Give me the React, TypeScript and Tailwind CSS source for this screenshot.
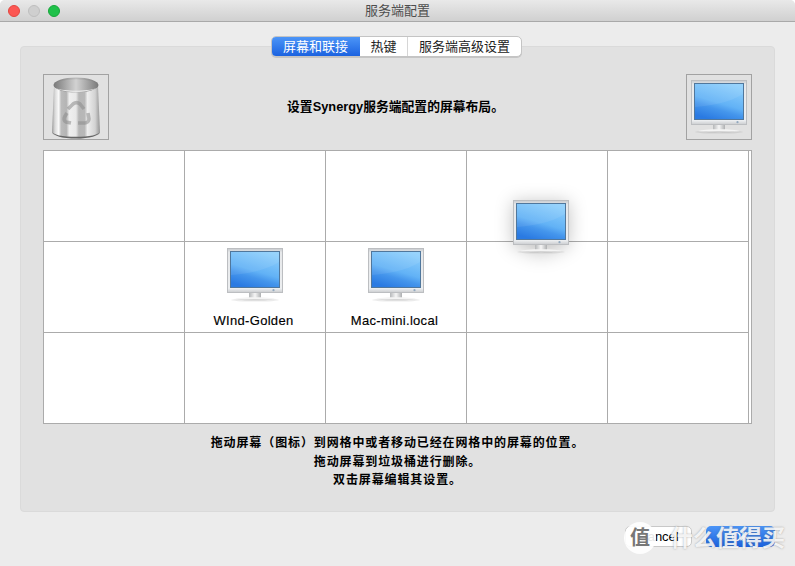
const FONT = "font-['Helvetica_Neue','Liberation_Sans','Noto_Sans_CJK_SC',sans-serif]";

const Monitor = ({ id }: { id: string }) => (
  <svg width="56" height="54" viewBox="0 0 56 54" className="block">
    <defs>
      <linearGradient id={`${id}-bezel`} x1="0" y1="0" x2="0" y2="1">
        <stop offset="0" stopColor="#c4c7cb" />
        <stop offset="0.1" stopColor="#e6e8ea" />
        <stop offset="0.9" stopColor="#eceef0" />
        <stop offset="1" stopColor="#c6c8cb" />
      </linearGradient>
      <linearGradient id={`${id}-screen`} x1="0.75" y1="0" x2="0.35" y2="1">
        <stop offset="0" stopColor="#8fd0fc" />
        <stop offset="0.55" stopColor="#62b2f6" />
        <stop offset="0.72" stopColor="#4596ec" />
        <stop offset="1" stopColor="#2a7ae2" />
      </linearGradient>
      <linearGradient id={`${id}-neck`} x1="0" y1="0" x2="1" y2="0">
        <stop offset="0" stopColor="#b5b7b9" />
        <stop offset="0.5" stopColor="#f6f6f6" />
        <stop offset="1" stopColor="#adafb1" />
      </linearGradient>
      <linearGradient id={`${id}-base`} x1="0" y1="0" x2="1" y2="0">
        <stop offset="0" stopColor="#9a9a9a" stopOpacity="0.15" />
        <stop offset="0.5" stopColor="#b5b5b5" />
        <stop offset="1" stopColor="#9a9a9a" stopOpacity="0.15" />
      </linearGradient>
    </defs>
    <ellipse cx="28" cy="52" rx="24" ry="1.6" fill="#000" opacity="0.08" />
    <rect x="22" y="44" width="12" height="6" fill={`url(#${id}-neck)`} />
    <path d="M7 51 C12 48.5 44 48.5 49 51 C44 52.5 12 52.5 7 51 Z" fill="#f4f4f4" />
    <path d="M7 51 C12 52.8 44 52.8 49 51 C44 51.8 12 51.8 7 51 Z" fill={`url(#${id}-base)`} />
    <rect x="0" y="0" width="56" height="45" fill={`url(#${id}-bezel)`} />
    <rect x="0.5" y="0.5" width="55" height="44" fill="none" stroke="#bcbec1" />
    <rect x="3.5" y="3.5" width="49" height="36" fill={`url(#${id}-screen)`} stroke="#50779c" />
    <path d="M4 27 C18 26 38 23 52 14 V4 H4 Z" fill="#fff" opacity="0.08" />
    <circle cx="46.5" cy="42.2" r="1.1" fill="#93a9bf" />
  </svg>
);

const Trash = () => (
  <svg width="50" height="63" viewBox="0 0 50 63" className="block">
    <defs>
      <linearGradient id="can" x1="0" y1="0" x2="1" y2="0">
        <stop offset="0" stopColor="#9a9a9a" />
        <stop offset="0.06" stopColor="#d8d8d8" />
        <stop offset="0.14" stopColor="#fafafa" />
        <stop offset="0.19" stopColor="#bcbcbc" />
        <stop offset="0.3" stopColor="#b4b4b4" />
        <stop offset="0.36" stopColor="#efefef" />
        <stop offset="0.5" stopColor="#e8e8e8" />
        <stop offset="0.56" stopColor="#b6b6b6" />
        <stop offset="0.68" stopColor="#b8b8b8" />
        <stop offset="0.74" stopColor="#eeeeee" />
        <stop offset="0.9" stopColor="#d2d2d2" />
        <stop offset="1" stopColor="#949494" />
      </linearGradient>
      <linearGradient id="rim" x1="0" y1="0" x2="1" y2="0">
        <stop offset="0" stopColor="#777" />
        <stop offset="0.5" stopColor="#bdbdbd" />
        <stop offset="1" stopColor="#777" />
      </linearGradient>
      <linearGradient id="inner" x1="0" y1="0" x2="1" y2="0">
        <stop offset="0" stopColor="#7d7d7d" />
        <stop offset="0.5" stopColor="#d2d2d2" />
        <stop offset="1" stopColor="#7d7d7d" />
      </linearGradient>
    </defs>
    <path d="M3 10 L1 56 C1 60 12 62.5 25 62.5 C38 62.5 49 60 49 56 L47 10 Z" fill="url(#can)" />
    <path d="M1 55 C1 60 12 62.5 25 62.5 C38 62.5 49 60 49 55 C49 59 38 60.8 25 60.8 C12 60.8 1 59 1 55 Z" fill="#666" />
    <ellipse cx="25" cy="9" rx="22.5" ry="7.5" fill="url(#rim)" />
    <ellipse cx="25" cy="9.6" rx="21.5" ry="6.4" fill="url(#inner)" />
    <path d="M5 12 C12 17 38 17 45 12 C38 15.6 12 15.6 5 12 Z" fill="#f0f0f0" />
    <g fill="none" stroke="#8c8c8c" strokeWidth="3.6" opacity="0.55">
      <path d="M17 33 L22 28 C24 26.5 27 26.5 29 28 L33 33" />
      <path d="M37 37 L38 43 C38 45 36 47 34 47 L27 47" />
      <path d="M20 47 L15 46 C13 45 12.5 43 13.5 41 L16 37" />
    </g>
  </svg>
);

const IconBox = ({ children }: { children: React.ReactNode }) => (
  <div className="flex h-[66px] w-[66px] shrink-0 items-center justify-center border border-[#a2a2a2]">
    {children}
  </div>
);

const Cell = ({ children }: { children?: React.ReactNode }) => (
  <div className="flex h-[91px] w-[141px] flex-col items-center border-r border-b border-[#ababab] pt-[6px]">
    {children}
  </div>
);

const Screen = ({ id, label }: { id: string; label: string }) => (
  <>
    <Monitor id={id} />
    <span className="mt-[11px] whitespace-nowrap pr-[3px] text-[13px] leading-[16px] tracking-[0.3px] text-black [-webkit-text-stroke:0.15px_black]">
      {label}
    </span>
  </>
);

export default function App() {
  return (
    <div className={`relative h-[566px] w-[795px] overflow-hidden rounded-t-[5px] bg-[#ececec] ${FONT}`}>
      <div className="relative flex h-[22px] items-center justify-center border-b border-[#a9a9a9] bg-gradient-to-b from-[#e9e9e9] to-[#d0d0d0]">
        <div className="absolute left-[8px] top-[5px] flex gap-[8px]">
          <span className="h-[12px] w-[12px] rounded-full border border-[#e2463f] bg-[#fc5753]" />
          <span className="h-[12px] w-[12px] rounded-full border border-[#bebebe] bg-[#cfcfcf]" />
          <span className="h-[12px] w-[12px] rounded-full border border-[#17a63a] bg-[#1fc14a]" />
        </div>
        <span className="text-[13px] text-[#4d4d4d]">服务端配置</span>
      </div>

      <div className="mx-[20px] mt-[24px] h-[466px] rounded-[4px] border border-[#dadada] bg-[#e1e1e1] px-[22px]">
        <div className="-mt-[11px] flex justify-center pr-[2px]">
          <div className="flex h-[21px] overflow-hidden rounded-[5px] border border-[#c4c4c4] bg-white text-[13px] leading-[19px] text-[#222] shadow-[0_1px_0_rgba(0,0,0,0.12)]">
            <span className="w-[88px] bg-gradient-to-b from-[#4c95f7] to-[#1b62e0] pr-[1px] text-center text-white">屏幕和联接</span>
            <span className="w-[48px] border-r border-[#d6d6d6] text-center">热键</span>
            <span className="w-[113px] text-center">服务端高级设置</span>
          </div>
        </div>

        <div className="mt-[17px] flex items-center justify-between">
          <IconBox>
            <Trash />
          </IconBox>
          <span className="pr-[4px] text-[12.8px] font-semibold text-black">设置Synergy服务端配置的屏幕布局。</span>
          <IconBox>
            <Monitor id="box" />
          </IconBox>
        </div>

        <div className="relative mt-[10px] w-[709px] border-t border-r border-l border-[#ababab] bg-white">
          <div className="grid w-[705px] grid-cols-[repeat(5,141px)]">
            <Cell />
            <Cell />
            <Cell />
            <Cell />
            <Cell />
            <Cell />
            <Cell>
              <Screen id="wind" label="WInd-Golden" />
            </Cell>
            <Cell>
              <Screen id="mac" label="Mac-mini.local" />
            </Cell>
            <Cell />
            <Cell />
            <Cell />
            <Cell />
            <Cell />
            <Cell />
            <Cell />
          </div>
          <div className="absolute left-[705px] top-0 h-full w-[3px] border-b border-[#ababab]" />
          <div className="absolute left-[469px] top-[49px] [filter:drop-shadow(0_2px_9px_rgba(0,0,0,0.24))]">
            <Monitor id="drag" />
          </div>
        </div>

        <div className="mt-[10px] text-center text-[12px] font-semibold leading-[18.5px] tracking-[0.88px] text-black">
          <p>拖动屏幕（图标）到网格中或者移动已经在网格中的屏幕的位置。</p>
          <p>拖动屏幕到垃圾桶进行删除。</p>
          <p>双击屏幕编辑其设置。</p>
        </div>
      </div>

      <div className="mt-[14px] flex justify-end gap-[14px] pr-[20px]">
        <button className="h-[21px] w-[67px] rounded-[5px] border border-[#c8c8c8] bg-white text-center text-[13px] leading-[19px] text-black">
          Cancel
        </button>
        <button className="h-[21px] w-[69px] rounded-[5px] bg-gradient-to-b from-[#4c95f7] to-[#1b62e0] text-center text-[13px] leading-[21px] text-white">
          OK
        </button>
      </div>

      <div className="absolute left-[624px] top-[522px] flex h-[32px] w-[32px] items-center justify-center rounded-full bg-white/90 text-[20px] font-bold text-[#777]">
        值
      </div>
      <div className="absolute left-[670px] top-[522px] flex whitespace-nowrap text-[23px] font-bold leading-[32px] text-white/85 [text-shadow:0_0_2px_rgba(90,90,90,0.55)]">
        什么值得买
      </div>
    </div>
  );
}
